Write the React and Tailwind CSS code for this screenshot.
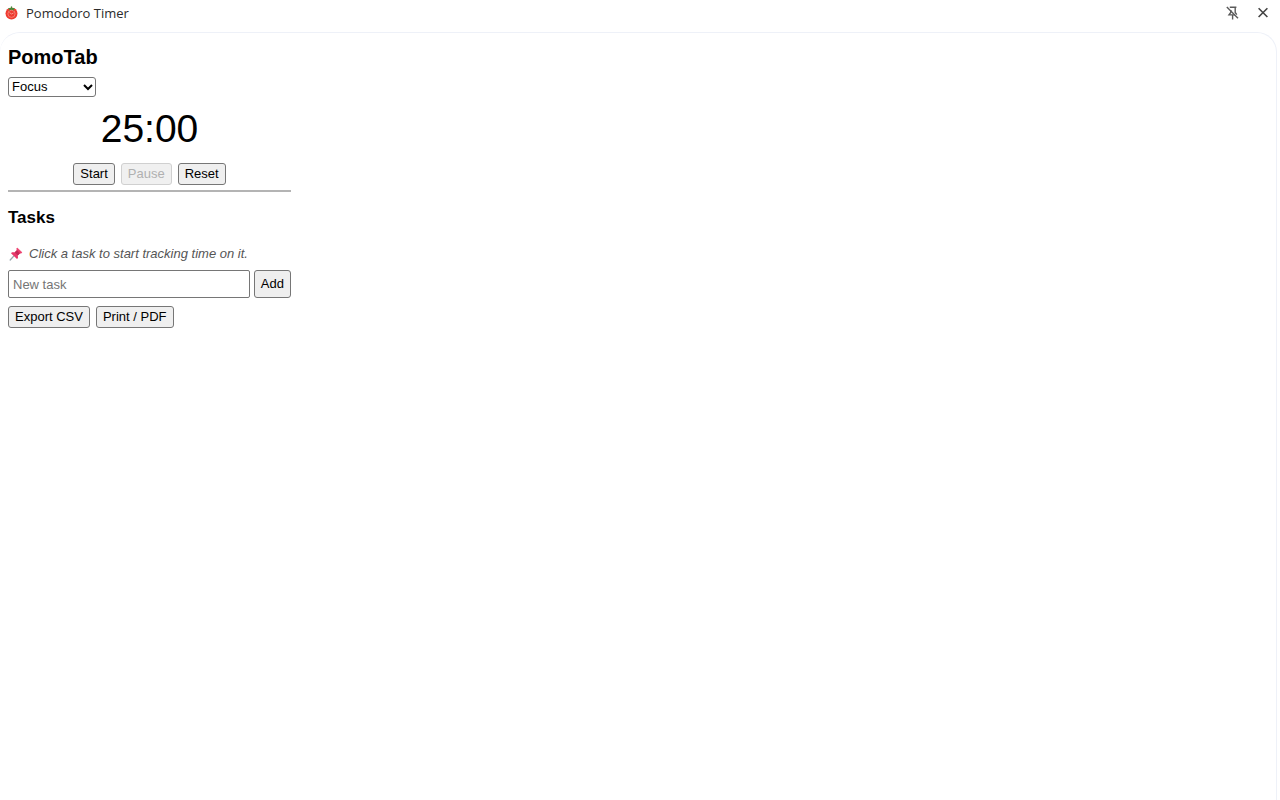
import React, { useEffect, useState } from 'react';

const MODES = { Focus: 25, 'Short Break': 5, 'Long Break': 15 };

const buttonClass =
  'h-[22px] rounded-[3px] border border-[#767676] bg-[#efefef] px-[6px] text-[13px] leading-[18px] text-black hover:bg-[#e5e5e5] disabled:border-[#d0d0d0] disabled:bg-[#f0f0f0] disabled:text-[#b0b0b0]';

function TomatoIcon() {
  return (
    <svg width="14" height="14" viewBox="0 0 14 14" aria-hidden="true">
      <circle cx="6.5" cy="7.4" r="6" fill="#ee3b30" />
      <circle cx="6.5" cy="7.8" r="3.6" fill="none" stroke="#f58c80" strokeWidth="0.8" />
      <path d="M6.5 8 4.5 6.6M6.5 8l2-1" stroke="#f9aaa0" strokeWidth="0.8" fill="none" />
      <path d="M6.5 2 2.7 2.2 4.3 3.2 3.9 4.8 6.5 3.6 9.1 4.8 8.7 3.2 10.3 2.2Z" fill="#3f8f3a" />
      <path d="M6.5 3V0.4" stroke="#3f8f3a" strokeWidth="1.2" />
    </svg>
  );
}

function UnpinIcon() {
  return (
    <svg width="14" height="14" viewBox="0 0 14 14" fill="none" stroke="#5a5a5a" strokeWidth="1.4" aria-hidden="true">
      <path d="M3.8 1.2h6.6M9.2 1.2v5.2l1.6 2.2M4.8 4v2.4L3 8.9h6M6.6 8.9v4.5" />
      <path d="M0.8 1 12 12.2" />
    </svg>
  );
}

function PushpinIcon() {
  return (
    <svg width="14" height="14" viewBox="0 0 14 14" aria-hidden="true">
      <path d="M5.4 8.4 1.2 13" stroke="#9aa5ad" strokeWidth="1.3" strokeLinecap="round" />
      <path d="M8.2 0.8 13.2 5.6 12 6.6 10.8 6.4 8.8 8.4 9 11 8 12 2 6.2 3 5.2 5.8 5.2 7.8 3.2 7.4 1.8Z" fill="#e8386a" />
      <path d="M7.8 3.2 10.8 6.4 8.8 8.4 5.8 5.2Z" fill="#c42a58" />
      <path d="M8.2 0.8 13.2 5.6 12.5 6.2 7.6 1.5Z" fill="#f0527a" />
    </svg>
  );
}

function TitleBar() {
  return (
    <header className="flex h-8 items-center justify-between pl-[5px] pr-[11px]">
      <div className="flex items-center gap-[7px] pb-[6px]">
        <TomatoIcon />
        <span className="font-['Open_Sans',sans-serif] text-[13px] font-medium leading-4 text-[#2b2b2b]">
          Pomodoro Timer
        </span>
      </div>
      <div className="flex items-center gap-[17px] pb-[6px]">
        <button aria-label="Unpin">
          <UnpinIcon />
        </button>
        <button aria-label="Close">
          <svg width="12" height="12" viewBox="0 0 12 12" stroke="#444" strokeWidth="1.6" aria-hidden="true">
            <path d="M1.6 1.2 10.4 10M10.4 1.2 1.6 10" />
          </svg>
        </button>
      </div>
    </header>
  );
}

function Timer() {
  const [mode, setMode] = useState('Focus');
  const [seconds, setSeconds] = useState(MODES.Focus * 60);
  const [running, setRunning] = useState(false);

  useEffect(() => {
    if (!running) return;
    const id = setInterval(() => setSeconds((s) => Math.max(0, s - 1)), 1000);
    return () => clearInterval(id);
  }, [running]);

  const reset = (name) => {
    setRunning(false);
    setSeconds(MODES[name] * 60);
  };

  const changeMode = (e) => {
    setMode(e.target.value);
    reset(e.target.value);
  };

  const minutes = String(Math.floor(seconds / 60)).padStart(2, '0');
  const rest = String(seconds % 60).padStart(2, '0');

  return (
    <section>
      <div className="relative mt-2 w-[88px]">
        <select
          aria-label="Mode"
          value={mode}
          onChange={changeMode}
          className="block h-5 w-full appearance-none rounded-[3px] border border-[#767676] bg-white pl-[3px] text-[13px] leading-[18px] text-black"
        >
          {Object.keys(MODES).map((name) => (
            <option key={name}>{name}</option>
          ))}
        </select>
        <svg
          className="pointer-events-none absolute right-[3px] top-[6px]"
          width="10"
          height="8"
          viewBox="0 0 10 8"
          fill="none"
          stroke="#000"
          strokeWidth="2"
          aria-hidden="true"
        >
          <path d="M1 2 5 6 9 2" />
        </svg>
      </div>
      <div className="mt-2 text-center text-[39px] leading-[48px]">
        {minutes}:{rest}
      </div>
      <div className="mt-[10px] flex justify-center gap-[6px]">
        <button className={buttonClass} disabled={running} onClick={() => setRunning(true)}>
          Start
        </button>
        <button className={buttonClass} disabled={!running} onClick={() => setRunning(false)}>
          Pause
        </button>
        <button className={buttonClass} onClick={() => reset(mode)}>
          Reset
        </button>
      </div>
    </section>
  );
}

function Tasks() {
  const [tasks, setTasks] = useState([]);
  const [text, setText] = useState('');

  const addTask = (e) => {
    e.preventDefault();
    if (!text.trim()) return;
    setTasks([...tasks, text.trim()]);
    setText('');
  };

  return (
    <section>
      <h2 className="mt-4 text-[17px] font-bold leading-5">Tasks</h2>
      <p className="mt-4 flex items-center gap-[6px] pl-px text-[13px] italic leading-5 text-[#555]">
        <PushpinIcon />
        Click a task to start tracking time on it.
      </p>
      <form onSubmit={addTask} className="mt-[6px] flex gap-1">
        <input
          aria-label="New task"
          value={text}
          onChange={(e) => setText(e.target.value)}
          placeholder="New task"
          className="h-7 min-w-0 flex-1 rounded-[2px] border border-[#767676] px-1 text-[13px] placeholder:text-[#757575]"
        />
        <button className="h-7 rounded-[3px] border border-[#767676] bg-[#efefef] px-[6px] text-[13px] text-black">
          Add
        </button>
      </form>
      {tasks.length > 0 && (
        <ul className="mt-2 text-[13px] leading-5">
          {tasks.map((task, i) => (
            <li key={i}>{task}</li>
          ))}
        </ul>
      )}
      <div className="mt-2 flex gap-[6px]">
        <button className={buttonClass}>Export CSV</button>
        <button className={buttonClass} onClick={() => window.print()}>
          Print / PDF
        </button>
      </div>
    </section>
  );
}

export default function App() {
  return (
    <div className="flex min-h-screen flex-col bg-white font-['Liberation_Sans',Arial,sans-serif] text-black">
      <TitleBar />
      <main className="mr-[3px] flex-1 rounded-t-[20px] border-r border-t border-[#eef1f8] px-2 pt-3">
        <div className="w-full max-w-[283px]">
          <h1 className="text-[20px] font-bold leading-6">PomoTab</h1>
          <Timer />
          <hr className="mt-[5px] border-t-2 border-[#b4b4b4]" />
          <Tasks />
        </div>
      </main>
    </div>
  );
}
